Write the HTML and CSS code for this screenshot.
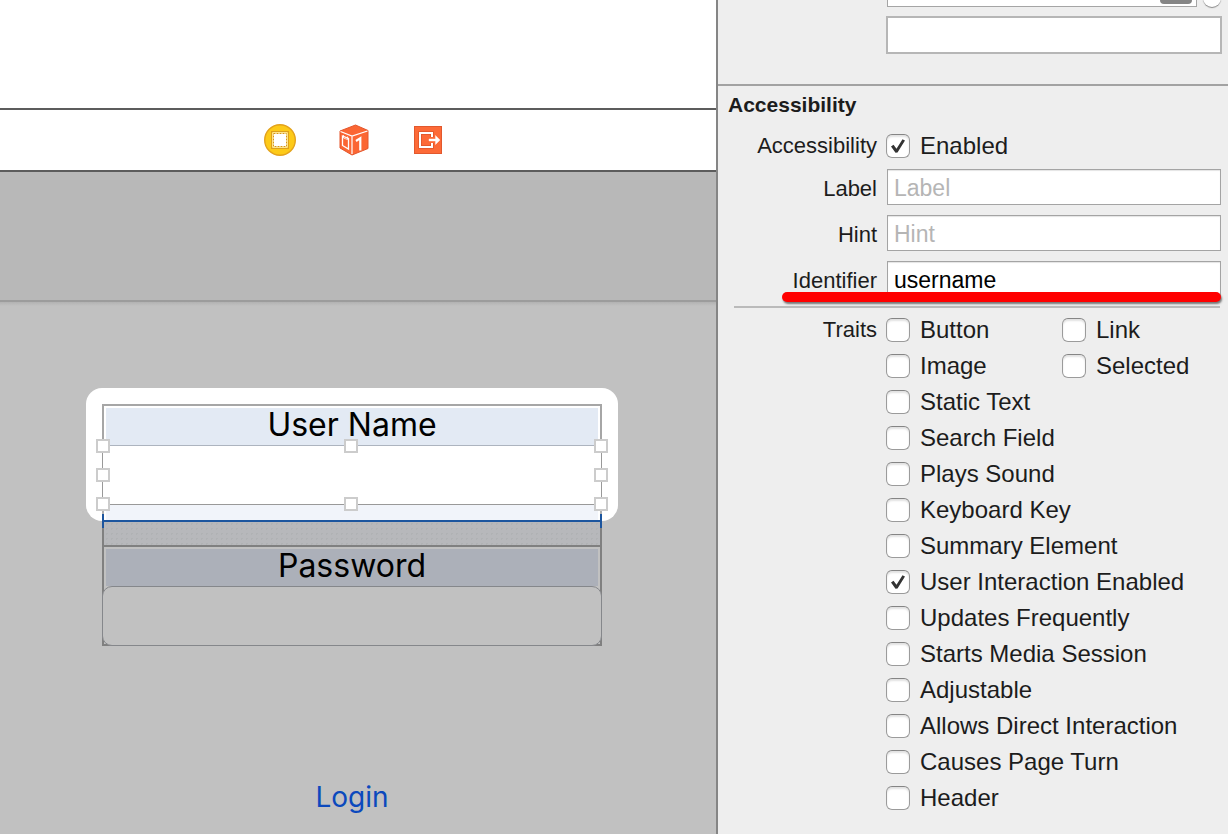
FILE: index.html
```html
<!DOCTYPE html>
<html lang="en">
<head>
<meta charset="utf-8">
<title>Interface Builder</title>
<link rel="stylesheet" href="styles.css">
</head>
<body>
<main class="editor">
  <div class="editor-top"></div>
  <div class="dock">
    <svg class="dock-icon" viewBox="0 0 32 32" role="img" aria-label="View Controller">
      <circle cx="16" cy="16" r="15.3" fill="#fdca18" stroke="#e3a21c" stroke-width="1.4"/>
      <rect x="7.500" y="7.500" width="17" height="17" fill="#fdca18" stroke="#dda01b"/>
      <rect x="9" y="9" width="14" height="14" fill="#fff" stroke="#fff"/>
      <rect x="9.500" y="9.500" width="13" height="13" fill="none" stroke="#d9980f" stroke-width="1" stroke-dasharray="2 1"/>
    </svg>
    <svg class="dock-icon" viewBox="0 0 32 32" role="img" aria-label="First Responder">
      <path d="M17.500 1L30 6.500v18L14 31 2 24V7z" fill="#fb6633" stroke="#e4562c" stroke-width="1"/>
      <path d="M2.500 7.500L14 12 29.500 7M14 12V30" fill="none" stroke="#fff" stroke-width="1.200"/>
      <path d="M4.500 12l6 2.500v10.500l-6-3.500z" fill="none" stroke="#fff" stroke-width="1.300"/>
      <path d="M5.500 11v3l4 1.500v-3" fill="none" stroke="#fff" stroke-width=".8"/>
      <path d="M18 17l4.300-2.800v12.300" fill="none" stroke="#fff" stroke-width="2.200"/>
    </svg>
    <svg class="dock-icon" viewBox="0 0 32 32" role="img" aria-label="Exit">
      <rect x="2.500" y="2.500" width="27" height="27" fill="#fd6a37" stroke="#e2582d"/>
      <path d="M20 13V9H8v14h12v-4" fill="none" stroke="#de562b" stroke-width="3.600"/>
      <path d="M20 13V9H8v14h12v-4" fill="none" stroke="#fff" stroke-width="2"/>
      <path d="M17 15h6.500v-3.500l4.500 4.500-4.500 4.500V17H17z" fill="#fff" stroke="#fff" stroke-width=".4"/>
    </svg>
  </div>
  <div class="nav-area"></div>
  <form class="canvas">
    <div class="stack">
      <div class="highlight">
        <label class="caption" for="user">User Name</label>
        <div class="selection">
          <input class="user-field" id="user" type="text">
          <span class="handle left top"></span><span class="handle mid top"></span><span class="handle right top"></span>
          <span class="handle left center"></span><span class="handle right center"></span>
          <span class="handle left bottom"></span><span class="handle mid bottom"></span><span class="handle right bottom"></span>
        </div>
        <div class="overflow-strip"></div>
        <div class="guide"></div>
      </div>
      <div class="gap-strip"></div>
      <label class="caption dim" for="pass">Password</label>
      <div class="pass-frame"><input class="pass-field" id="pass" type="password"></div>
    </div>
    <button class="login" type="button">Login</button>
  </form>
</main>

<aside class="inspector">
  <div class="clipped-row">
    <div class="clipped-field"><span class="pill"></span></div>
    <span class="knob"></span>
  </div>
  <div class="notes-row"><input class="notes" type="text" aria-label="Notes"></div>
  <section class="section">
    <h2 class="heading">Accessibility</h2>
    <div class="row">
      <span class="name">Accessibility</span>
      <label class="check"><input type="checkbox" checked>Enabled</label>
    </div>
    <div class="fields">
      <div class="row"><label class="name" for="lab">Label</label><input class="text" id="lab" type="text" placeholder="Label"></div>
      <div class="row"><label class="name" for="hint">Hint</label><input class="text" id="hint" type="text" placeholder="Hint"></div>
      <div class="row marked"><label class="name" for="ident">Identifier</label><input class="text" id="ident" type="text" value="username"></div>
    </div>
    <hr class="rule">
    <div class="row traits">
      <span class="name">Traits</span>
      <div class="trait-grid">
        <label class="check"><input type="checkbox">Button</label>
        <label class="check"><input type="checkbox">Link</label>
        <label class="check"><input type="checkbox">Image</label>
        <label class="check"><input type="checkbox">Selected</label>
        <label class="check wide"><input type="checkbox">Static Text</label>
        <label class="check wide"><input type="checkbox">Search Field</label>
        <label class="check wide"><input type="checkbox">Plays Sound</label>
        <label class="check wide"><input type="checkbox">Keyboard Key</label>
        <label class="check wide"><input type="checkbox">Summary Element</label>
        <label class="check wide"><input type="checkbox" checked>User Interaction Enabled</label>
        <label class="check wide"><input type="checkbox">Updates Frequently</label>
        <label class="check wide"><input type="checkbox">Starts Media Session</label>
        <label class="check wide"><input type="checkbox">Adjustable</label>
        <label class="check wide"><input type="checkbox">Allows Direct Interaction</label>
        <label class="check wide"><input type="checkbox">Causes Page Turn</label>
        <label class="check wide"><input type="checkbox">Header</label>
      </div>
    </div>
  </section>
</aside>
</body>
</html>
```

FILE: styles.css
```css
* { box-sizing: border-box; }
body {
  margin: 0;
  min-height: 100vh;
  display: flex;
  background: #eee;
  color: #1c1c1c;
  font-family: "Liberation Sans", Arial, sans-serif;
}
input, button { font: inherit; margin: 0; outline: none; }

/* Editor */
.editor { flex: 1; min-width: 0; display: flex; flex-direction: column; background: #fff; }
.editor-top { height: 108px; }
.dock {
  display: flex;
  justify-content: center;
  align-items: center;
  gap: 42px;
  height: 64px;
  padding-right: 8px;
  border: solid #5c5c5c;
  border-width: 2px 0;
}
.dock-icon { width: 32px; height: 32px; }
.nav-area { height: 128px; background: #b8b8b8; }
.canvas {
  flex: 1;
  display: flex;
  flex-direction: column;
  align-items: center;
  padding: 86px 12px 0 0;
  border-top: 2px solid #9c9c9c;
  background: linear-gradient(#b2b2b2, #c1c1c1 4px);
  font-family: Inter, sans-serif;
}
.stack { width: 500px; max-width: 100%; }
.highlight {
  position: relative;
  margin: 0 -16px;
  padding: 16px 16px 0;
  border-radius: 16px;
  background: #fff;
}
.caption {
  display: block;
  height: 41px;
  padding: 2px 2px 0;
  border: 2px solid #a6a6a6;
  border-bottom: 0;
  background: #e3eaf4 content-box;
  color: #000;
  font-size: 32px;
  line-height: 34px;
  text-align: center;
}
.caption.dim { border-color: #808080; background-color: #acb0b9; }
.selection { position: relative; }
.user-field {
  display: block;
  width: 100%;
  height: 60px;
  border: 1px solid #999;
  border-top-color: #adb4bf;
  background: #fff;
}
.handle {
  position: absolute;
  width: 14px;
  height: 14px;
  border: 2px solid #ccc;
  background: #fff;
}
.left { left: -6px; }
.mid { left: calc(50% - 8px); }
.right { right: -6px; }
.top { top: -6px; }
.center { top: calc(50% - 7px); }
.bottom { bottom: -6px; }
.overflow-strip {
  height: 16px;
  padding: 0 2px;
  border: solid #b0b0b0;
  border-width: 0 2px;
  background: #f1f4fa content-box;
}
.guide {
  position: absolute;
  left: 16px;
  right: 16px;
  bottom: -7px;
  height: 14px;
  border: solid #1c559e;
  border-width: 0 2px;
  background: linear-gradient(#1c559e, #1c559e) center / 100% 2px no-repeat;
}
.gap-strip {
  height: 24px;
  border: solid #808080;
  border-width: 0 2px;
  background: radial-gradient(circle, #b0b2b4 1px, #b7b8bb 1px) 0 0 / 5px 5px;
}
.pass-frame { border: solid #808080; border-width: 0 2px 2px; }
.pass-field {
  display: block;
  width: calc(100% + 4px);
  height: 60px;
  margin: 0 -2px -2px;
  border: 1px solid #85878b;
  border-radius: 10px;
  background: #c1c1c1;
}
.login {
  margin-top: 132px;
  padding: 0;
  border: 0;
  background: none;
  color: #0b49bd;
  font-size: 28px;
  line-height: 38px;
}

/* Inspector */
.inspector { width: 512px; flex: none; border-left: 2px solid #858585; background: #eee; }
.clipped-row { display: flex; align-items: flex-end; gap: 6px; height: 7px; padding: 0 7px 0 169px; }
.clipped-field {
  flex: 1;
  display: flex;
  justify-content: flex-end;
  height: 7px;
  padding-right: 4px;
  border: 1px solid #a5a5a5;
  border-top: 0;
  background: #fff;
}
.pill { width: 32px; height: 4px; border-radius: 0 0 6px 6px; background: #858585; }
.knob { width: 18px; height: 18px; border-radius: 50%; background: #fff; box-shadow: 0 1px 1px #888; }
.notes-row { padding: 9px 6px 30px 168px; border-bottom: 2px solid #a2a2a2; }
.notes { display: block; width: 100%; height: 38px; border: 2px solid #b6b6b6; background: #fff; }
.section { padding: 6px 7px 0 10px; }
.heading { margin: 0 0 10px; font-size: 21px; line-height: 26px; }
.row { display: grid; grid-template-columns: 149px 1fr; column-gap: 10px; align-items: center; }
.name { font-size: 22px; line-height: 36px; text-align: right; }
.fields .name { padding-top: 3px; line-height: 33px; }
.check {
  display: flex;
  align-items: center;
  gap: 10px;
  margin-left: -1px;
  font-size: 24px;
  line-height: 36px;
  white-space: nowrap;
}
.check input {
  appearance: none;
  flex: none;
  width: 24px;
  height: 24px;
  border: 1px solid #9b9b9b;
  border-top-color: #858585;
  border-radius: 6px;
  background: #fff;
  box-shadow: inset 0 2px 2px #e2e2e2;
}
.check input:checked::before {
  content: "";
  display: block;
  width: 22px;
  height: 22px;
  background: #333;
  clip-path: path("M4 11.500L6.500 9.800 9.500 13.800 15.500 4.300 18 5.500 10.500 17.500 8.500 17.800z");
}
.fields { display: grid; gap: 10px; margin-top: 5px; }
.text {
  width: 100%;
  height: 36px;
  padding: 2px 6px 0;
  border: 1px solid #a4a4a4;
  background: #fff;
  box-shadow: inset 0 1px 1px #e4e4e4;
  color: #000;
  font-size: 23px;
}
.text::placeholder { color: #b5b5b5; opacity: 1; }
.marked { position: relative; }
.marked::after {
  content: "";
  position: absolute;
  left: 54px;
  right: 0;
  bottom: -5px;
  height: 10px;
  border-radius: 5px;
  background: #f00;
  box-shadow: 1px 2px 2px #777;
}
.rule { height: 2px; margin: 9px 1px 4px 6px; border: 0; background: #bababa; }
.row.traits { align-items: start; }
.trait-grid { display: grid; grid-template-columns: 176px 1fr; }
.wide { grid-column: 1 / -1; }
```
